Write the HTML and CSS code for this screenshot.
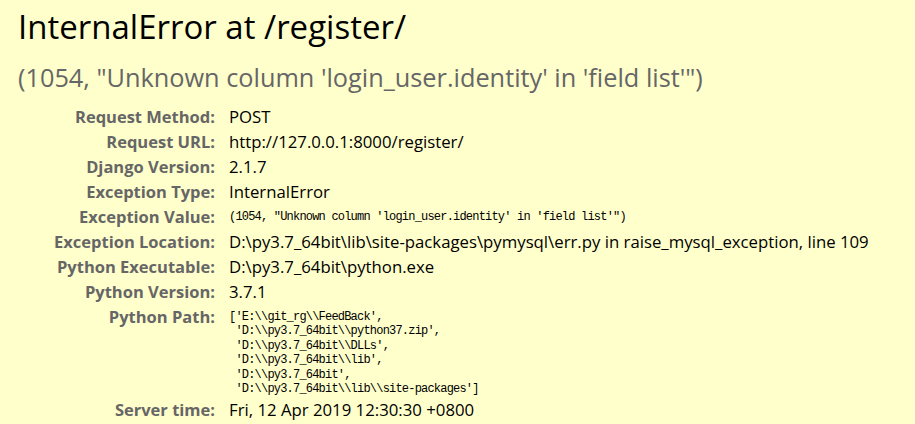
FILE: index.html
```html
<!DOCTYPE html>
<html lang="en">
<head>
<meta charset="utf-8">
<title>InternalError at /register/</title>
<link rel="stylesheet" href="styles.css">
</head>
<body>
<div class="summary">
  <h1 class="title">InternalError at /register/</h1>
  <pre class="exception-value">(1054, "Unknown column 'login_user.identity' in 'field list'")</pre>
  <table class="meta">
    <tbody>
      <tr><th>Request Method:</th><td>POST</td></tr>
      <tr><th>Request URL:</th><td>http://127.0.0.1:8000/register/</td></tr>
      <tr><th>Django Version:</th><td>2.1.7</td></tr>
      <tr><th>Exception Type:</th><td>InternalError</td></tr>
      <tr><th>Exception Value:</th><td><pre class="code">(1054, "Unknown column 'login_user.identity' in 'field list'")</pre></td></tr>
      <tr><th>Exception Location:</th><td>D:\py3.7_64bit\lib\site-packages\pymysql\err.py in raise_mysql_exception, line 109</td></tr>
      <tr><th>Python Executable:</th><td>D:\py3.7_64bit\python.exe</td></tr>
      <tr><th>Python Version:</th><td>3.7.1</td></tr>
      <tr><th>Python Path:</th><td><pre class="code">['E:\\git_rg\\FeedBack',
 'D:\\py3.7_64bit\\python37.zip',
 'D:\\py3.7_64bit\\DLLs',
 'D:\\py3.7_64bit\\lib',
 'D:\\py3.7_64bit',
 'D:\\py3.7_64bit\\lib\\site-packages']</pre></td></tr>
      <tr><th>Server time:</th><td>Fri, 12 Apr 2019 12:30:30 +0800</td></tr>
    </tbody>
  </table>
</div>
</body>
</html>
```
FILE: styles.css
```css
html, body {
  margin: 0;
  padding: 0;
  background: #ffffcc;
}
body {
  font-family: "Open Sans", "Noto Sans", sans-serif;
  color: #000;
}
.summary {
  padding: 0 18px;
}
.title {
  margin: 0;
  padding-top: 5px;
  font-size: 33px;
  line-height: 44px;
  font-weight: normal;
  color: #000;
}
.exception-value {
  margin: 12px 0 0 0;
  font-family: "Open Sans", "Noto Sans", sans-serif;
  font-size: 25.3px;
  line-height: 32px;
  color: #666666;
  white-space: pre;
}
.meta {
  border-collapse: collapse;
  margin-top: 11px;
}
.meta th {
  width: 197px;
  padding: 2px 14px 2px 0;
  text-align: right;
  vertical-align: top;
  font-weight: bold;
  font-size: 16.5px;
  line-height: 21px;
  color: #666666;
  white-space: nowrap;
}
.meta td {
  padding: 2px 0;
  vertical-align: top;
  font-size: 16.75px;
  line-height: 21px;
  white-space: nowrap;
}
.code {
  margin: 0 0 -1px 0;
  padding-top: 4px;
  font-family: "Liberation Mono", "DejaVu Sans Mono", monospace;
  font-size: 12px;
  letter-spacing: -0.8px;
  line-height: 14.4px;
  color: #000;
}
```
